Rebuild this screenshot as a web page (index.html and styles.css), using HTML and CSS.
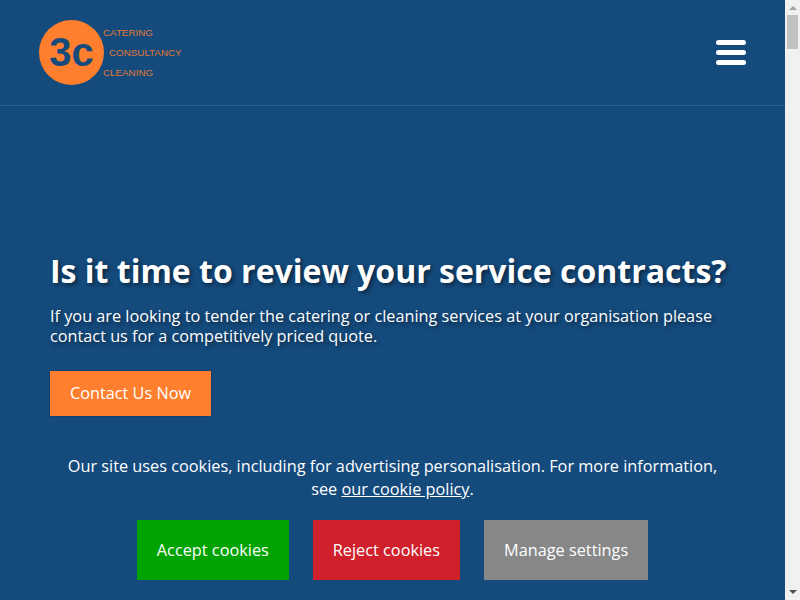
FILE: index.html
```html
<!DOCTYPE html>
<html lang="en">
<head>
  <meta charset="UTF-8">
  <meta name="viewport" content="width=device-width, initial-scale=1.0">
  <title>3c - Catering, Consultancy, Cleaning</title>
  <link rel="stylesheet" href="styles.css">
</head>
<body>

<div class="site">
  <header class="site-header">
    <a class="logo" href="#">
      <span class="logo-mark">3c</span>
      <span class="logo-words">
        <span>CATERING</span>
        <span class="logo-indent">CONSULTANCY</span>
        <span>CLEANING</span>
      </span>
    </a>
    <button class="menu-btn" aria-label="Menu">
      <span></span><span></span><span></span>
    </button>
  </header>

  <main class="page">
    <section class="hero">
      <h1>Is it time to review your service contracts?</h1>
      <p>If you are looking to tender the catering or cleaning services at your organisation please contact us for a competitively priced quote.</p>
      <a class="hero-btn" href="#">Contact Us Now</a>
    </section>
  </main>

  <div class="cookie-bar">
    <p>Our site uses cookies, including for advertising personalisation. For more information, see <a href="#">our cookie policy</a>.</p>
    <div class="cookie-actions">
      <a class="cookie-btn accept" href="#">Accept cookies</a>
      <a class="cookie-btn reject" href="#">Reject cookies</a>
      <a class="cookie-btn manage" href="#">Manage settings</a>
    </div>
  </div>
</div>

<div class="scrollbar">
  <span class="arrow-up"></span>
  <div class="scroll-track"><div class="scroll-thumb"></div></div>
  <span class="arrow-down"></span>
</div>

</body>
</html>
```

FILE: styles.css
```css
html, body {
  height: 100%;
}

body {
  margin: 0;
  display: flex;
  overflow: hidden;
  font-family: 'Open Sans', sans-serif;
  background-color: #144a7c;
  color: #fff;
}

a {
  color: inherit;
}

.site {
  flex: 1;
  display: flex;
  flex-direction: column;
  min-width: 0;
}

.site-header {
  height: 105px;
  padding: 0 39px;
  border-bottom: 1px solid #2a5f93;
  display: flex;
  align-items: center;
  justify-content: space-between;
}

.logo {
  display: flex;
  text-decoration: none;
}

.logo-mark {
  width: 65px;
  height: 65px;
  border-radius: 50%;
  background-color: #ff7f2e;
  color: #144a7c;
  font-family: 'Liberation Sans', sans-serif;
  font-weight: bold;
  font-size: 40px;
  line-height: 65px;
  text-align: center;
}

.logo-words {
  display: flex;
  flex-direction: column;
  justify-content: space-between;
  margin-left: -1px;
  padding: 7px 0 6px;
  font-family: 'Liberation Sans', sans-serif;
  font-size: 9.8px;
  line-height: 12px;
  color: #e27a33;
}

.logo-indent {
  margin-left: 6px;
}

.menu-btn {
  width: 30px;
  padding: 0;
  border: none;
  background: none;
  display: flex;
  flex-direction: column;
  gap: 5px;
  cursor: pointer;
}

.menu-btn span {
  height: 5px;
  border-radius: 3px;
  background-color: #fff;
}

.page {
  flex: 1;
}

.hero {
  padding: 143px 50px 0;
}

.hero h1 {
  margin: 0 0 13px;
  font-size: 32px;
  line-height: 44px;
  text-shadow: 2px 2px 4px rgba(0,0,0,0.5);
}

.hero p {
  margin: 0 0 25px;
  font-size: 16.25px;
  line-height: 20px;
  text-shadow: 2px 2px 4px rgba(0,0,0,0.5);
}

.hero-btn {
  display: inline-block;
  padding: 0 20px;
  height: 45px;
  line-height: 45px;
  font-size: 16.25px;
  background-color: #ff7f2e;
  box-shadow: 0 0 2px rgba(0,0,0,0.3);
  text-decoration: none;
}

.cookie-bar {
  padding: 0 62px 20px;
  text-align: center;
}

.cookie-bar p {
  margin: 0 0 19px;
  font-size: 16.3px;
  line-height: 23px;
}

.cookie-actions {
  display: flex;
  justify-content: center;
  gap: 24px;
}

.cookie-btn {
  padding: 0 20px;
  height: 60px;
  line-height: 60px;
  font-size: 16.3px;
  white-space: nowrap;
  text-decoration: none;
}

.accept {
  background-color: #00a300;
}

.reject {
  background-color: #cf202c;
}

.manage {
  background-color: #878787;
}

.scrollbar {
  width: 15px;
  background-color: #f1f1f1;
  display: flex;
  flex-direction: column;
  align-items: center;
}

.scroll-track {
  flex: 1;
  width: 100%;
  margin: 15px 0;
}

.scroll-thumb {
  height: 34px;
  margin: 0 2px;
  background-color: #c1c1c1;
}

.arrow-up, .arrow-down {
  position: absolute;
  width: 0;
  height: 0;
  border-left: 4px solid transparent;
  border-right: 4px solid transparent;
}

.arrow-up {
  top: 6px;
  border-bottom: 4px solid #a3a3a3;
}

.arrow-down {
  bottom: 6px;
  border-top: 4px solid #505050;
}
```
